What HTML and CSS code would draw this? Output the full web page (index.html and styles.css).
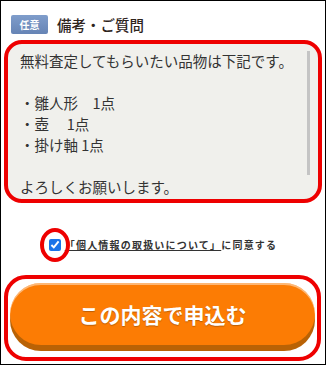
FILE: index.html
```html
<!DOCTYPE html>
<html lang="ja">

<head>
    <meta charset="UTF-8">
    <meta name="viewport" content="width=device-width, initial-scale=1.0">
    <title>備考・ご質問</title>
    <link rel="stylesheet" href="styles.css">
</head>

<body>
    <div class="frame">
        <div class="head">
            <span class="badge">任意</span>
            <h2 class="title">備考・ご質問</h2>
        </div>

        <div class="memo">
            <p>無料査定してもらいたい品物は下記です。</p>
            <p>&nbsp;</p>
            <p>・雛人形　1点</p>
            <p>・壺　 1点</p>
            <p>・掛け軸 1点</p>
            <p>&nbsp;</p>
            <p>よろしくお願いします。</p>
            <span class="scroll"></span>
        </div>

        <label class="agree">
            <span class="check">
                <input type="checkbox" checked>
                <span class="ring"></span>
            </span>
            <span><a href="#">「個人情報の取扱いについて」</a>に同意する</span>
        </label>

        <div class="mark">
            <button class="submit">この内容で申込む</button>
        </div>
    </div>
</body>

</html>
```

FILE: styles.css
```css
body {
    margin: 0;
    padding: 0;
    background: #fff;
    font-family: 'Noto Sans CJK JP', 'Noto Sans', sans-serif;
    color: #333;
}

.frame {
    box-sizing: border-box;
    width: 326px;
    height: 365px;
    border: 1px solid #000;
}

.head {
    display: flex;
    align-items: center;
    gap: 9px;
    padding: 13px 0 0 10px;
}

.badge {
    width: 37px;
    height: 19px;
    line-height: 19px;
    text-align: center;
    border-radius: 2px;
    background: linear-gradient(#7f9dcb, #6684b5);
    color: #fff;
    font-size: 10px;
    font-weight: bold;
}

.title {
    margin: 0;
    font-size: 14.5px;
    font-weight: 500;
    color: #2e241c;
}

.memo {
    position: relative;
    box-sizing: border-box;
    width: 318px;
    height: 163px;
    margin: 5px 0 0 3px;
    padding: 6px 12px 0 12px;
    border: 4px solid #ee0000;
    border-radius: 18px;
    background: #f0f0ec;
}

.memo p {
    margin: 0;
    font-size: 14.5px;
    line-height: 21px;
    color: #333;
}

.scroll {
    position: absolute;
    top: 7px;
    right: 8px;
    width: 3px;
    height: 124px;
    background: #c4c4c4;
}

.agree {
    display: flex;
    align-items: center;
    justify-content: center;
    gap: 4px;
    margin-top: 34px;
    font-size: 10px;
    letter-spacing: 1.2px;
    font-weight: bold;
    color: #333;
}

.agree a {
    color: #333;
    text-decoration: underline;
}

.check {
    position: relative;
    display: inline-flex;
}

.check input {
    width: 12px;
    height: 12px;
    margin: 0;
    accent-color: #1a73e8;
}

.ring {
    position: absolute;
    left: -9px;
    top: -11px;
    width: 22px;
    height: 26px;
    border: 4px solid #ee0000;
    border-radius: 50%;
}

.mark {
    box-sizing: border-box;
    width: 317px;
    margin: 23px 0 0 3px;
    padding: 4px 2px 12px 2px;
    border: 4px solid #ee0000;
    border-radius: 22px;
}

.submit {
    display: block;
    width: 100%;
    height: 62px;
    border: 0;
    border-radius: 31px;
    background: #fc7c04;
    box-shadow: inset 0 2px 0 rgba(255, 255, 255, .45), 0 6px 0 #b96205;
    color: #fff;
    font-family: inherit;
    font-size: 21px;
    font-weight: bold;
    text-shadow: 0 1px 1px rgba(0, 0, 0, .25);
}
```
